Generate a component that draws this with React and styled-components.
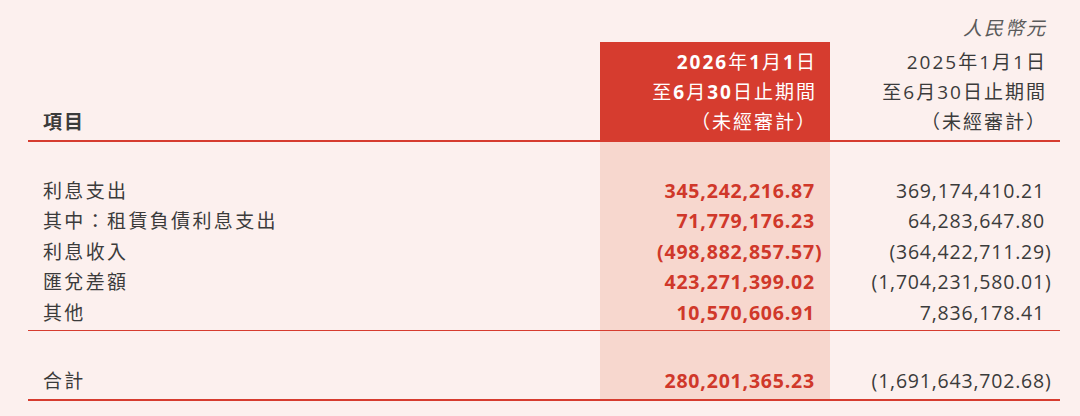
import React from 'react';
import styled, { createGlobalStyle } from 'styled-components';

const RED = '#d63c2f';
const PINK = '#f7d7ce';
const BG = '#fcf0ee';
const TEXT = '#3b3b3b';

const GlobalStyle = createGlobalStyle`
  html, body {
    margin: 0;
    padding: 0;
    background: ${BG};
  }
  body {
    font-family: "Open Sans", "Noto Sans CJK TC", sans-serif;
    color: ${TEXT};
  }
`;

const COLS = '572px 230px 230px';

const Page = styled.div`
  width: 1080px;
  height: 416px;
  box-sizing: border-box;
  padding: 0 20px 0 28px;
  background: ${BG};
  overflow: hidden;
`;

const UnitRow = styled.div`
  display: grid;
  grid-template-columns: ${COLS};
  height: 42px;
  box-sizing: border-box;
  padding-top: 13px;
`;

const Unit = styled.div`
  grid-column: 3;
  text-align: right;
  padding-right: 13px;
  font-size: 19px;
  line-height: 30px;
  letter-spacing: 2px;
  font-style: italic;
  color: #5a5a5a;
`;

const Section = styled.div`
  display: grid;
  grid-template-columns: ${COLS};
  padding: ${p => p.$pad};
  border-bottom: ${p => p.$line}px solid ${RED};
  background: ${p => p.$shade
    ? `linear-gradient(to right, transparent 572px, ${PINK} 572px, ${PINK} 802px, transparent 802px)`
    : 'none'};
`;

const HeadCell = styled.div`
  display: flex;
  flex-direction: column;
  justify-content: flex-end;
  align-items: ${p => (p.$left ? 'flex-start' : 'flex-end')};
  height: 98px;
  box-sizing: border-box;
  padding: ${p => (p.$left ? '0 0 3px 15px' : '5px 13px 3px 0')};
  background: ${p => (p.$current ? RED : 'transparent')};
  color: ${p => (p.$current ? '#ffffff' : TEXT)};
  font-size: 19px;
  line-height: 30px;
  letter-spacing: 2px;
  font-weight: ${p => (p.$left ? 700 : 400)};
  white-space: nowrap;
`;

const Bold = styled.span`
  font-weight: ${p => (p.$on ? 700 : 400)};
`;

const Label = styled.div`
  padding-left: 15px;
  font-size: 19px;
  line-height: 30.5px;
  letter-spacing: 2.35px;
  color: ${TEXT};
  white-space: nowrap;
`;

const Amount = styled.div`
  text-align: right;
  padding-right: 5px;
  font-size: 19.5px;
  line-height: 30.5px;
  letter-spacing: 0.8px;
  font-weight: ${p => (p.$current ? 700 : 400)};
  color: ${p => (p.$current ? '#d0382a' : TEXT)};
  white-space: nowrap;
`;

const Paren = styled.span`
  display: inline-block;
  width: 10px;
  text-align: left;
`;

const fmt = v => (v < 0 ? '(' + format(-v) : format(v));

function format(v) {
  return v.toLocaleString('en-US', { minimumFractionDigits: 2, maximumFractionDigits: 2 });
}

const rows = [
  { label: '利息支出', cur: 345242216.87, prev: 369174410.21 },
  { label: '其中：租賃負債利息支出', cur: 71779176.23, prev: 64283647.8 },
  { label: '利息收入', cur: -498882857.57, prev: -364422711.29 },
  { label: '匯兌差額', cur: 423271399.02, prev: -1704231580.01 },
  { label: '其他', cur: 10570606.91, prev: 7836178.41 },
];

const total = { label: '合計', cur: 280201365.23, prev: -1691643702.68 };

const Money = ({ value, current }) => (
  <Amount $current={current}>
    {fmt(value)}
    <Paren>{value < 0 ? ')' : ''}</Paren>
  </Amount>
);

const DataRow = ({ row }) => (
  <>
    <Label>{row.label}</Label>
    <Money value={row.cur} current />
    <Money value={row.prev} />
  </>
);

const PeriodHead = ({ year, current }) => (
  <HeadCell $current={current}>
    <div>
      <Bold $on={current}>{year}</Bold>年<Bold $on={current}>1</Bold>月<Bold $on={current}>1</Bold>日
    </div>
    <div>
      至<Bold $on={current}>6</Bold>月<Bold $on={current}>30</Bold>日止期間
    </div>
    <div>（未經審計）</div>
  </HeadCell>
);

export default function App() {
  return (
    <Page>
      <GlobalStyle />
      <UnitRow>
        <Unit>人民幣元</Unit>
      </UnitRow>

      <Section $line={2}>
        <HeadCell $left>項目</HeadCell>
        <PeriodHead year="2026" current />
        <PeriodHead year="2025" />
      </Section>

      <Section $line={1} $shade $pad="33.75px 0 1.75px">
        {rows.map(r => (
          <DataRow key={r.label} row={r} />
        ))}
      </Section>

      <Section $line={2} $shade $pad="34.75px 0 2.75px">
        <DataRow row={total} />
      </Section>
    </Page>
  );
}
